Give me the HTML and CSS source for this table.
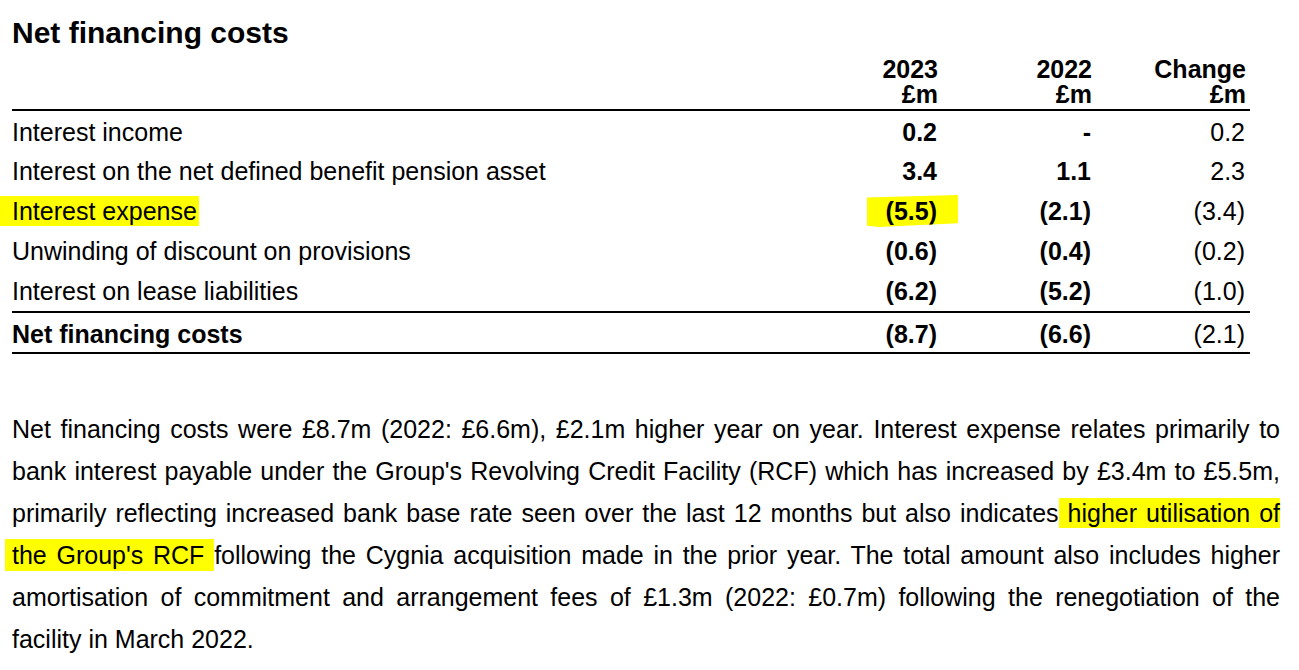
FILE: index.html
```html
<!DOCTYPE html>
<html lang="en">
<head>
<meta charset="utf-8">
<title>Net financing costs</title>
<link rel="stylesheet" href="styles.css">
</head>
<body>
<main class="page">
  <h1 class="title">Net financing costs</h1>
  <table class="fin">
    <thead>
      <tr>
        <th class="label"></th>
        <th class="num">2023<br>£m</th>
        <th class="num">2022<br>£m</th>
        <th class="num">Change<br>£m</th>
      </tr>
    </thead>
    <tbody>
      <tr>
        <td class="label">Interest income</td>
        <td class="num b">0.2</td>
        <td class="num b">-</td>
        <td class="num">0.2</td>
      </tr>
      <tr>
        <td class="label">Interest on the net defined benefit pension asset</td>
        <td class="num b">3.4</td>
        <td class="num b">1.1</td>
        <td class="num">2.3</td>
      </tr>
      <tr>
        <td class="label"><span class="hl hl-label">Interest expense</span></td>
        <td class="num b"><span class="hl hl-num">(5.5)</span></td>
        <td class="num b">(2.1)</td>
        <td class="num">(3.4)</td>
      </tr>
      <tr>
        <td class="label">Unwinding of discount on provisions</td>
        <td class="num b">(0.6)</td>
        <td class="num b">(0.4)</td>
        <td class="num">(0.2)</td>
      </tr>
      <tr class="last">
        <td class="label">Interest on lease liabilities</td>
        <td class="num b">(6.2)</td>
        <td class="num b">(5.2)</td>
        <td class="num">(1.0)</td>
      </tr>
      <tr class="total">
        <td class="label b">Net financing costs</td>
        <td class="num b">(8.7)</td>
        <td class="num b">(6.6)</td>
        <td class="num">(2.1)</td>
      </tr>
    </tbody>
  </table>
  <p class="note">Net financing costs were £8.7m (2022: £6.6m), £2.1m higher year on year. Interest expense relates primarily to bank interest payable under the Group's Revolving Credit Facility (RCF) which has increased by £3.4m to £5.5m, primarily reflecting increased bank base rate seen over the last 12 months but also indicates<span class="hl hl-text1"> higher utilisation of</span> <span class="hl hl-text2">the Group's RCF </span>following the Cygnia acquisition made in the prior year. The total amount also includes higher amortisation of commitment and arrangement fees of £1.3m (2022: £0.7m) following the renegotiation of the facility in March 2022.</p>
</main>
</body>
</html>
```

FILE: styles.css
```css
* { box-sizing: border-box; }
html, body { margin: 0; padding: 0; background: #ffffff; }
body {
  font-family: "Liberation Sans", Arial, sans-serif;
  color: #000000;
}
.page {
  width: 1299px;
  padding: 15px 19px 0 12px;
}
.title {
  margin: 0;
  font-size: 30px;
  line-height: 36px;
  font-weight: bold;
}
.fin {
  width: 1238px;
  border-collapse: collapse;
  font-size: 25px;
}
.fin th {
  font-weight: bold;
  line-height: 25px;
  padding: 6px 4px 2px 0;
  vertical-align: bottom;
  border-bottom: 2px solid #000;
}
.fin td {
  height: 40px;
  line-height: 28px;
  padding: 3px 5px 1px 0;
  vertical-align: middle;
  white-space: nowrap;
}
.fin .label { text-align: left; padding-left: 0; }
.fin .num { text-align: right; width: 154px; }
.fin .b { font-weight: bold; }
.fin tr.last td {
  height: 42px;
  padding-top: 3px;
  padding-bottom: 3px;
}
.fin tr.total td {
  border-top: 2px solid #000;
  border-bottom: 2px solid #000;
  height: 41px;
  padding-top: 3px;
}
.hl {
  background: #ffff00;
}
.hl-label {
  margin-left: -12px;
  padding: 1px 2px 1px 12px;
}
.hl-num {
  display: inline-block;
  line-height: 32px;
  padding: 0 21px 0 19px;
  margin-right: -21px;
  clip-path: polygon(0 8%, 100% 0, 100% 88%, 14% 100%, 0 96%);
}
.note {
  margin: 54px 0 0 0;
  font-size: 25px;
  line-height: 42px;
  text-align: justify;
}
.hl-text1 {
  padding: 1px 0;
}
.hl-text2 {
  margin-left: -7px;
  padding: 2px 0 2px 7px;
}
```
